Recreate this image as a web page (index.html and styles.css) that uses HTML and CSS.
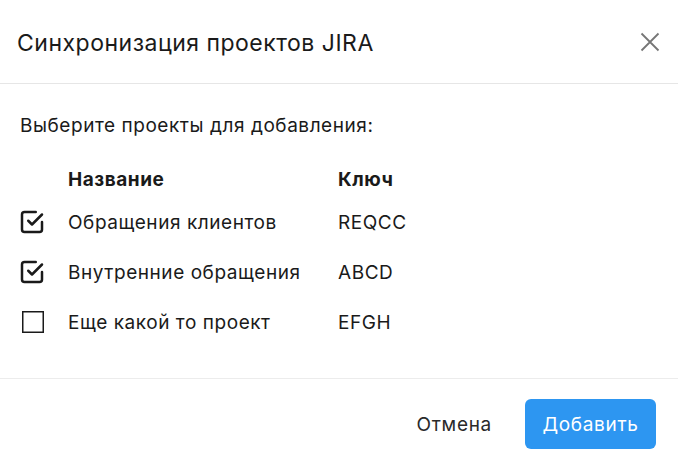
FILE: index.html
```html
<!DOCTYPE html>
<html lang="ru">
<head>
<meta charset="utf-8">
<link rel="stylesheet" href="styles.css">
</head>
<body>
<div class="dialog">
  <div class="header">
    <h1 class="title">Синхронизация проектов JIRA</h1>
    <button class="close" aria-label="Закрыть">
      <svg width="20" height="20" viewBox="0 0 20 20"><path d="M1.5 1.5 L18.5 18.5 M18.5 1.5 L1.5 18.5" stroke="#767676" stroke-width="1.8" fill="none"/></svg>
    </button>
  </div>
  <div class="body">
    <p class="lead">Выберите проекты для добавления:</p>
    <div class="table">
      <div class="row head">
        <span class="cb"></span>
        <span class="name">Название</span>
        <span class="key">Ключ</span>
      </div>
      <div class="row">
        <span class="cb">
          <svg class="icon" width="30" height="30" viewBox="0 0 24 24" fill="none" stroke="#1a1a1a" stroke-width="2" stroke-linecap="round" stroke-linejoin="round"><path d="M9 11l3 3l8 -8"/><path d="M20 12v6a2 2 0 0 1 -2 2h-12a2 2 0 0 1 -2 -2v-12a2 2 0 0 1 2 -2h9"/></svg>
        </span>
        <span class="name">Обращения клиентов</span>
        <span class="key">REQCC</span>
      </div>
      <div class="row">
        <span class="cb">
          <svg class="icon" width="30" height="30" viewBox="0 0 24 24" fill="none" stroke="#1a1a1a" stroke-width="2" stroke-linecap="round" stroke-linejoin="round"><path d="M9 11l3 3l8 -8"/><path d="M20 12v6a2 2 0 0 1 -2 2h-12a2 2 0 0 1 -2 -2v-12a2 2 0 0 1 2 -2h9"/></svg>
        </span>
        <span class="name">Внутренние обращения</span>
        <span class="key">ABCD</span>
      </div>
      <div class="row">
        <span class="cb">
          <svg class="icon" width="30" height="30" viewBox="0 0 30 30"><rect x="5.75" y="4.75" width="20.5" height="20.5" fill="none" stroke="#1a1a1a" stroke-width="1.5"/></svg>
        </span>
        <span class="name">Еще какой то проект</span>
        <span class="key">EFGH</span>
      </div>
    </div>
  </div>
  <div class="footer">
    <button class="btn cancel">Отмена</button>
    <button class="btn primary">Добавить</button>
  </div>
</div>
</body>
</html>
```

FILE: styles.css
```css
* { box-sizing: border-box; }
html, body { margin: 0; padding: 0; background: #fff; }
body {
  font-family: Inter, "Noto Sans", sans-serif;
  color: #1a1a1a;
  width: 678px;
  height: 469px;
  overflow: hidden;
}
.dialog { width: 678px; height: 469px; display: flex; flex-direction: column; }
.header {
  height: 84px;
  flex: none;
  border-bottom: 1px solid #e6e6e6;
  display: flex;
  align-items: center;
  justify-content: space-between;
  padding: 0 18px 0 17px;
}
.title {
  margin: 0;
  font-size: 23px;
  line-height: 26px;
  font-weight: 400;
  letter-spacing: 0.5px;
  padding-top: 3px;
}
.close {
  border: 0;
  background: none;
  padding: 0;
  width: 20px;
  height: 20px;
  cursor: pointer;
  display: flex;
}
.body {
  height: 295px;
  flex: none;
  padding: 31px 20px 0 20px;
  border-bottom: 1px solid #ececec;
}
.lead { margin: 0 0 25px 0; font-size: 19px; line-height: 22px; letter-spacing: 0.55px; }
.table { display: flex; flex-direction: column; }
.row {
  display: grid;
  grid-template-columns: 48px 270px 1fr;
  align-items: center;
  height: 50px;
  font-size: 19px;
  letter-spacing: 0.55px;
}
.row.head { height: 35px; font-weight: 700; }
.cb { display: flex; align-items: center; }
.icon { margin-left: -3px; }
.footer {
  flex: 1;
  display: flex;
  justify-content: flex-end;
  align-items: center;
  gap: 33px;
  padding: 0 22px 0 0;
}
.btn {
  font-family: inherit;
  font-size: 19px;
  letter-spacing: 0.7px;
  border: 0;
  cursor: pointer;
}
.cancel { background: none; color: #2a2a2a; padding: 0; }
.primary {
  background: #2d96f1;
  color: #fff;
  width: 131px;
  height: 50px;
  border-radius: 6px;
  padding: 0;
}
```
